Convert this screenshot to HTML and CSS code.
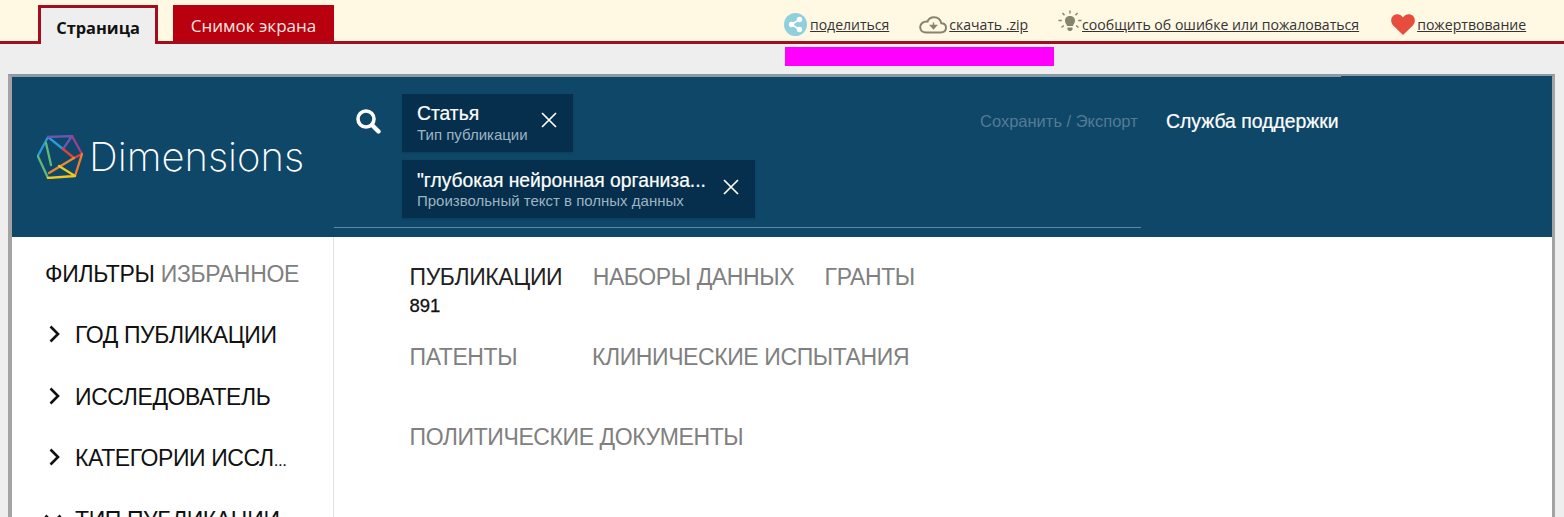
FILE: index.html
```html
<!DOCTYPE html>
<html lang="ru">
  <head>
    <meta charset="UTF-8" />
    <title>Dimensions</title>
    <link rel="stylesheet" href="styles.css">
  </head>
  <body>
    <div class="topbar">
      <div class="tabs">
        <div class="tab tab-active">Страница</div>
        <div class="tab tab-red">Снимок экрана</div>
      </div>
      <div class="links">
        <a class="link link-share">
          <svg width="23" height="23" viewBox="0 0 23 23">
            <circle cx="11.5" cy="11.5" r="11.5" fill="#8fd0dc"/>
            <path d="M15.5 6.5 L7.5 11.5 L15.5 16.5" fill="none" stroke="#fff" stroke-width="1.8"/>
            <circle cx="15.5" cy="6.5" r="2.7" fill="#fff"/>
            <circle cx="7.5" cy="11.5" r="2.7" fill="#fff"/>
            <circle cx="15.5" cy="16.5" r="2.7" fill="#fff"/>
          </svg>
          <span>поделиться</span>
        </a>
        <a class="link link-zip">
          <svg width="28" height="18" viewBox="0 0 28 18">
            <path d="M7 16.5 H21.5 C25 16.5 27 14.5 27 11.8 C27 9 25 7.2 22.3 7.2 C21.5 3.5 18.5 1.2 15 1.2 C11.8 1.2 9.5 3 8.5 5.6 C4.5 5.2 1.2 7.6 1.2 11 C1.2 14.2 3.6 16.5 7 16.5 Z" fill="none" stroke="#86836f" stroke-width="2"/>
            <path d="M14.5 6.5 V11 M11.7 9.5 L14.5 12.6 L17.3 9.5 Z" fill="#86836f" stroke="#86836f" stroke-width="1.4"/>
          </svg>
          <span>скачать .zip</span>
        </a>
        <a class="link link-bug">
          <svg width="24" height="24" viewBox="0 0 24 24">
            <path d="M12 6 C15 6 17 8 17 10.8 C17 13 15.4 14 15 16 H9 C8.6 14 7 13 7 10.8 C7 8 9 6 12 6 Z" fill="#86836f"/>
            <path d="M9.5 17.5 H14.5 V19.5 L13 21 H11 L9.5 19.5 Z" fill="#86836f"/>
            <path d="M12 0.5 V3.5 M4.5 3 L6.5 5.2 M19.5 3 L17.5 5.2 M0.5 10.5 H3.8 M20.2 10.5 H23.5 M3.5 17.5 L5.8 15.5 M20.5 17.5 L18.2 15.5" stroke="#86836f" stroke-width="1.4"/>
          </svg>
          <span>сообщить об ошибке или пожаловаться</span>
        </a>
        <a class="link link-heart">
          <svg width="24" height="21" viewBox="0 0 24 21">
            <path d="M12 21 L2.2 11.4 C-0.6 8.4 -0.4 4 2.2 1.8 C5 -0.6 9.4 -0.2 12 3.4 C14.6 -0.2 19 -0.6 21.8 1.8 C24.4 4 24.6 8.4 21.8 11.4 Z" fill="#e74c3c"/>
          </svg>
          <span>пожертвование</span>
        </a>
      </div>
    </div>

    <div class="notice-row"><div class="notice"></div></div>

    <div class="frame">
      <header class="head">
        <div class="brand">
          <svg width="46" height="44" viewBox="0 0 46 44">
            <g fill="none" stroke-width="2.3" stroke-linejoin="round" stroke-linecap="round">
              <path d="M11 2 L26 14 M0.8 21 L11 2" stroke="#2a9bd6"/>
              <path d="M11 2 L35 1 L26 14" stroke="#6a55b0"/>
              <path d="M35 1 L45 19" stroke="#a13f8f"/>
              <path d="M26 14 L37 23 L45 19" stroke="#e2403a"/>
              <path d="M0.8 21 L11 43 M9 8 L14 30" stroke="#5db87a"/>
              <path d="M37 23 L12 38" stroke="#e98a2c"/>
              <path d="M45 19 L38 41" stroke="#ef7c2b"/>
              <path d="M11 43 L38 41 L22 31" stroke="#f2c81e"/>
            </g>
          </svg>
          <span class="brand-name">Dimensions</span>
        </div>
        <div class="search">
          <svg class="search-icon" width="26" height="26" viewBox="0 0 26 26">
            <circle cx="11" cy="11" r="8" fill="none" stroke="#fff" stroke-width="3.6"/>
            <path d="M17 17 L23.5 23.5" stroke="#fff" stroke-width="4.4" stroke-linecap="round"/>
          </svg>
          <div class="chips">
            <div class="chip">
              <div class="chip-text">
                <div class="chip-title">Статья</div>
                <div class="chip-sub">Тип публикации</div>
              </div>
              <svg class="chip-x" width="16" height="16" viewBox="0 0 16 16"><path d="M1 1 L15 15 M15 1 L1 15" stroke="#fff" stroke-width="1.7"/></svg>
            </div>
            <div class="chip chip-long">
              <div class="chip-text">
                <div class="chip-title">"глубокая нейронная организа...</div>
                <div class="chip-sub">Произвольный текст в полных данных</div>
              </div>
              <svg class="chip-x" width="16" height="16" viewBox="0 0 16 16"><path d="M1 1 L15 15 M15 1 L1 15" stroke="#fff" stroke-width="1.7"/></svg>
            </div>
          </div>
          <div class="save">Сохранить / Экспорт</div>
        </div>
        <div class="support">Служба поддержки</div>
      </header>
      <div class="main">
        <aside class="side">
          <div class="side-tabs"><span>ФИЛЬТРЫ</span> <span class="muted">ИЗБРАННОЕ</span></div>
          <div class="filter">
            <svg width="12" height="18" viewBox="0 0 12 18"><path d="M2.5 1.5 L10 9 L2.5 16.5" fill="none" stroke="#111" stroke-width="2.6"/></svg>
            <span>ГОД ПУБЛИКАЦИИ</span>
          </div>
          <div class="filter">
            <svg width="12" height="18" viewBox="0 0 12 18"><path d="M2.5 1.5 L10 9 L2.5 16.5" fill="none" stroke="#111" stroke-width="2.6"/></svg>
            <span>ИССЛЕДОВАТЕЛЬ</span>
          </div>
          <div class="filter">
            <svg width="12" height="18" viewBox="0 0 12 18"><path d="M2.5 1.5 L10 9 L2.5 16.5" fill="none" stroke="#111" stroke-width="2.6"/></svg>
            <span>КАТЕГОРИИ ИССЛ<span class="dots">...</span></span>
          </div>
          <div class="filter filter-open">
            <svg width="18" height="12" viewBox="0 0 18 12"><path d="M1.5 2.5 L9 10 L16.5 2.5" fill="none" stroke="#111" stroke-width="2.6"/></svg>
            <span>ТИП ПУБЛИКАЦИИ</span>
          </div>
        </aside>
        <section class="results">
          <div class="types">
            <div class="type type-on">ПУБЛИКАЦИИ<div class="count">891</div></div>
            <div class="type">НАБОРЫ ДАННЫХ</div>
            <div class="type">ГРАНТЫ</div>
          </div>
          <div class="types">
            <div class="type type-patent">ПАТЕНТЫ</div>
            <div class="type">КЛИНИЧЕСКИЕ ИСПЫТАНИЯ</div>
          </div>
          <div class="types">
            <div class="type">ПОЛИТИЧЕСКИЕ ДОКУМЕНТЫ</div>
          </div>
        </section>
      </div>
    </div>
  </body>
</html>
```

FILE: styles.css
```css
html, body {
  height: 517px;
  overflow: hidden;
}
body {
  margin: 0;
  background: #eeeeee;
  font-family: "Liberation Sans", Arial, sans-serif;
  color: #111;
}
.topbar {
  height: 41px;
  background: #fff8e3;
  border-bottom: 3px solid #a30e1e;
  display: flex;
  font-family: "Open Sans", sans-serif;
}
.tabs {
  display: flex;
  align-items: flex-end;
  gap: 15px;
  margin-left: 38px;
  height: 44px;
}
.tab {
  box-sizing: border-box;
  display: flex;
  align-items: center;
  justify-content: center;
  white-space: nowrap;
}
.tab-active {
  width: 120px;
  height: 39px;
  background: #eeeeee;
  border: 3px solid #a30e1e;
  border-bottom: none;
  font-size: 16.4px;
  font-weight: 700;
  color: #111;
  padding-top: 3px;
}
.tab-red {
  width: 161px;
  height: 36px;
  margin-bottom: 3px;
  padding-top: 5px;
  background: #b8000f;
  color: #fbe9e0;
  font-size: 17px;
}
.links {
  display: flex;
  align-items: center;
  margin-left: 450px;
  padding-top: 8px;
  height: 33px;
  font-size: 14px;
  color: #333;
}
.link {
  display: flex;
  align-items: center;
  text-decoration: underline;
  white-space: nowrap;
}
.link span {
  margin-top: -1px;
}
.link-share {
  margin-right: 30px;
  gap: 3px;
}
.link-zip {
  margin-right: 30px;
  gap: 2px;
}
.link-bug {
  margin-right: 32px;
  font-size: 14.1px;
}
.link-bug svg {
  margin-top: -6px;
}
.link-heart {
  gap: 2px;
  font-size: 14.1px;
}
.notice-row {
  height: 19px;
  margin-top: 3px;
  padding-left: 785px;
}
.notice {
  width: 269px;
  height: 19px;
  background: #ff00ff;
}
.frame {
  margin: 8px 9px 0 8px;
  height: 440px;
  border-left: 4px solid #a3a3a3;
  border-right: 3px solid #a3a3a3;
  border-top: 3px solid #8c9aa4;
  background: #fff;
}
.head {
  position: relative;
  height: 160px;
  background: #0f4768;
  display: flex;
}
.head::after {
  content: "";
  position: absolute;
  top: -1px;
  left: 1329px;
  right: 0;
  height: 1px;
  background: #0f4768;
}
.brand {
  width: 322px;
  flex: none;
  box-sizing: border-box;
  padding: 58px 0 0 25px;
  display: flex;
  align-items: flex-start;
  gap: 6px;
}
.brand-name {
  font-family: Inter, sans-serif;
  font-weight: 200;
  font-size: 40px;
  line-height: 44px;
  color: #fff;
}
.search {
  width: 807px;
  flex: none;
  height: 150px;
  border-bottom: 1px solid #5f8aa3;
  display: flex;
  align-items: flex-start;
}
.search-icon {
  margin: 31px 21px 0 21px;
  flex: none;
}
.chips {
  display: flex;
  flex-direction: column;
  align-items: flex-start;
  gap: 8px;
  padding-top: 17px;
  width: 578px;
  flex: none;
}
.chip {
  background: #052f4c;
  height: 58px;
  box-sizing: border-box;
  padding: 9px 16px 0 15px;
  display: flex;
  gap: 13px;
  box-shadow: 0 1px 2px rgba(0, 0, 0, 0.15);
}
.chip-long {
  gap: 14px;
  padding-top: 10px;
}
.chip-long .chip-text {
  width: 292px;
}
.chip-title {
  font-size: 19.3px;
  line-height: 22px;
  color: #fff;
  -webkit-text-stroke: 0.2px #fff;
}
.chip-sub {
  font-size: 15px;
  line-height: 17px;
  margin-top: 1px;
  color: #9fb4c2;
}
.chip-long .chip-sub {
  margin-top: 0;
}
.chip-x {
  margin-top: 9px;
  flex: none;
}
.save {
  font-size: 16.5px;
  color: #557a93;
  padding-top: 35px;
  white-space: nowrap;
}
.support {
  font-size: 19.4px;
  color: #fff;
  padding: 33px 0 0 25px;
  -webkit-text-stroke: 0.2px #fff;
  white-space: nowrap;
}
.main {
  display: flex;
}
.side {
  width: 321px;
  height: 280px;
  flex: none;
  border-right: 1px solid #e2e2e2;
  overflow: hidden;
}
.side-tabs {
  font-size: 23px;
  line-height: 26px;
  padding: 24px 0 0 33px;
  letter-spacing: -0.3px;
  color: #111;
}
.muted {
  color: #808080;
}
.filter {
  display: flex;
  align-items: center;
  height: 26px;
  margin-top: 35.5px;
  padding-left: 36px;
  gap: 15px;
  font-size: 23px;
  letter-spacing: -0.4px;
  white-space: nowrap;
}
.filter svg {
  margin-top: -3px;
}
.dots {
  font-size: 17px;
}
.filter-open {
  padding-left: 32px;
  gap: 13px;
}
.results {
  padding: 27px 0 0 75.5px;
}
.types {
  display: flex;
  height: 80px;
  gap: 30.5px;
}
.type {
  font-size: 23px;
  line-height: 26px;
  color: #808080;
  letter-spacing: -0.4px;
  white-space: nowrap;
}
.type-on {
  color: #222;
}
.count {
  font-size: 18.5px;
  line-height: 22px;
  margin-top: 5px;
  letter-spacing: 0;
  color: #111;
  -webkit-text-stroke: 0.3px #111;
}
.type-patent {
  width: 152px;
}
```
